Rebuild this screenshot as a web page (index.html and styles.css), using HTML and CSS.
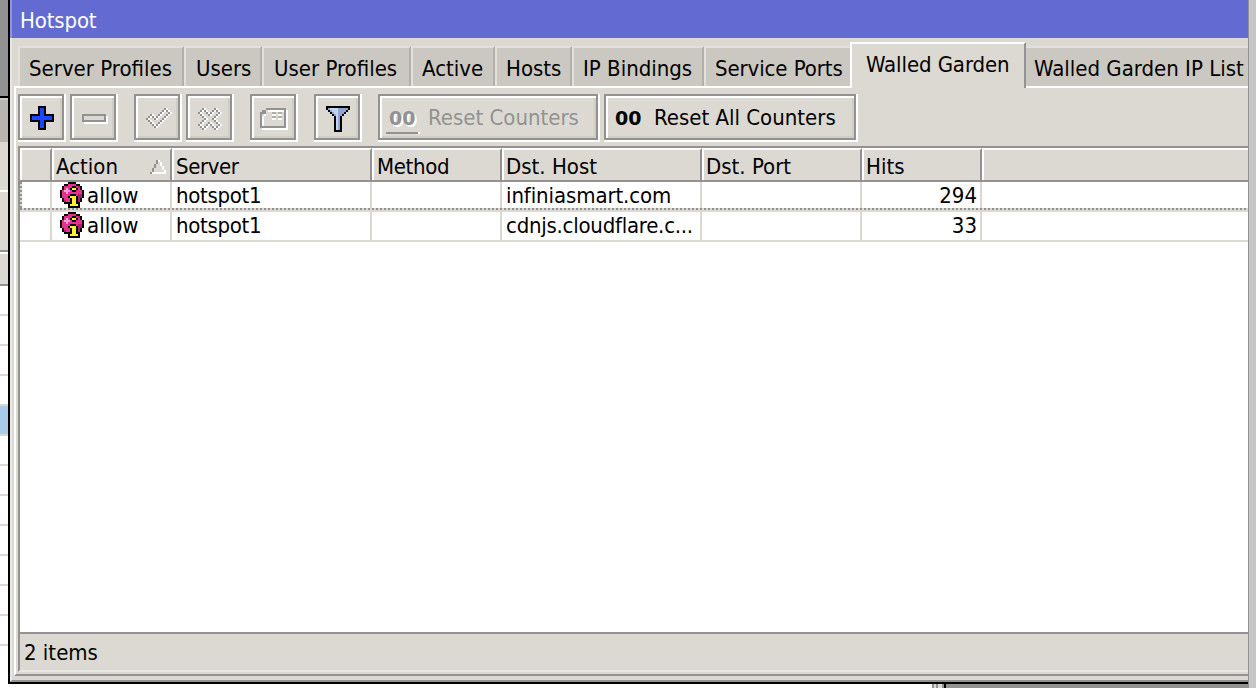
FILE: index.html
```html
<!DOCTYPE html>
<html lang="en">
<head>
<meta charset="utf-8">
<title>Hotspot</title>
<link rel="stylesheet" href="styles.css">
</head>
<body>
<div class="desktop">
  <div class="back-window">
    <div class="back-dark"></div>
    <div class="back-mid"></div>
    <div class="back-toolbar"></div>
    <div class="back-tools"></div>
    <div class="back-head"></div>
    <div class="back-row"></div><div class="back-row"></div><div class="back-row"></div><div class="back-row"></div>
    <div class="back-row selected"></div>
    <div class="back-row"></div><div class="back-row"></div><div class="back-row"></div><div class="back-row"></div>
    <div class="back-row"></div><div class="back-row"></div><div class="back-row"></div>
  </div>
  <div class="main">
    <section class="window">
      <header class="title">Hotspot</header>
      <div class="body">
        <nav class="tabs">
          <div class="tab t1">Server Profiles</div>
          <div class="tab t2">Users</div>
          <div class="tab t3">User Profiles</div>
          <div class="tab t4">Active</div>
          <div class="tab t5">Hosts</div>
          <div class="tab t6">IP Bindings</div>
          <div class="tab t7">Service Ports</div>
          <div class="tab t8 active">Walled Garden</div>
          <div class="tab t9">Walled Garden IP List</div>
        </nav>
        <div class="panel">
          <div class="toolbar">
            <div class="btn"><svg class="icon" data-sprite="plus"></svg></div>
            <div class="btn gap"><svg class="icon minus" data-sprite="minus"></svg></div>
            <div class="btn"><svg class="icon low" data-sprite="check"></svg></div>
            <div class="btn gap"><svg class="icon low" data-sprite="cross"></svg></div>
            <div class="btn gap"><svg class="icon low note" data-sprite="note"></svg></div>
            <div class="btn gap"><svg class="icon" data-sprite="funnel"></svg></div>
            <div class="btn wide disabled"><span class="zeros">00</span><span class="label">Reset Counters</span></div>
            <div class="btn wide all"><span class="zeros">00</span><span class="label">Reset All Counters</span></div>
          </div>
          <div class="table">
            <div class="row head">
              <div></div><div>Action<svg class="sort" data-sprite="sort"></svg></div><div class="server">Server</div><div class="method">Method</div><div>Dst. Host</div><div>Dst. Port</div><div>Hits</div><div></div>
            </div>
            <div class="row focus">
              <div></div><div class="action"><svg data-sprite="info"></svg>allow</div><div class="name">hotspot1</div><div></div><div class="host">infiniasmart.com</div><div></div><div class="num">294</div><div></div>
            </div>
            <div class="row">
              <div></div><div class="action"><svg data-sprite="info"></svg>allow</div><div class="name">hotspot1</div><div></div><div class="dots">cdnjs.cloudflare.c...</div><div></div><div class="num">33</div><div></div>
            </div>
            <div class="empty"></div>
          </div>
          <footer class="status">2 items</footer>
        </div>
      </div>
    </section>
    <div class="below"><div class="below-white"></div><div class="below-frame"></div><div class="below-gray"></div></div>
  </div>
  <div class="edge"></div>
</div>
<script src="sprites.js"></script>
</body>
</html>
```
FILE: styles.css
```css
* { box-sizing: border-box; }
body {
  margin: 0;
  width: 1256px;
  height: 688px;
  overflow: hidden;
  background: #fff;
  color: #000;
  font: 22px/26px "DejaVu Sans Condensed", "DejaVu Sans", sans-serif;
  white-space: nowrap;
}
svg { display: block; flex: none; shape-rendering: crispEdges; }
.desktop { display: flex; height: 688px; }

.back-window { width: 8px; flex: none; background: #fff; }
.back-dark { height: 98px; background: #929292; border-bottom: 2px solid #000; }
.back-mid { height: 44px; background: #b8b5b0; border-top: 2px solid #cbc8c1; }
.back-toolbar { height: 50px; background: #dcd9d2; border-bottom: 2px solid #fff; }
.back-tools { height: 60px; background: #dcd9d2; border-bottom: 2px solid #929292; }
.back-head { height: 34px; background: #dcd9d2; border-top: 2px solid #fff; border-bottom: 2px solid #929292; }
.back-row { height: 30px; border-bottom: 2px solid #dcd9d2; }
.back-row.selected { background: #a9cbea; }

.main { width: 1240px; flex: none; display: flex; flex-direction: column; }
.window {
  height: 684px;
  flex: none;
  display: flex;
  flex-direction: column;
  border-left: 2px solid #000;
  border-bottom: 2px solid #000;
  background: #dcd9d2;
}
.title {
  height: 38px;
  flex: none;
  padding: 8px 0 0 8px;
  color: #fff;
  background: #636bd3;
  border-left: 2px solid #9196de;
  letter-spacing: -0.15px;
}
.body {
  height: 644px;
  display: flex;
  flex-direction: column;
  border-left: 2px solid #e9e7e3;
  border-bottom: 2px solid #929292;
  padding: 4px 0 4px 2px;
}
.tabs { display: flex; align-items: flex-end; height: 46px; flex: none; padding-left: 4px; position: relative; z-index: 1; }
.tab {
  height: 40px;
  flex: none;
  margin-bottom: 2px;
  padding: 8px 0 0 8px;
  background: #cbc8c1;
  border: 2px solid #e3e0db;
  border-right-color: #b3b0ab;
  border-bottom: 0;
}
.t1 { width: 166px; padding-left: 9px; }
.t2 { width: 78px; padding-left: 10px; }
.t3 { width: 149px; padding-left: 10px; }
.t4 { width: 84px; padding-left: 9px; }
.t5 { width: 77px; padding-left: 9px; }
.t6 { width: 132px; padding-left: 9px; }
.t7 { width: 146px; padding-left: 9px; border-right: 0; letter-spacing: -0.1px; }
.t8 { width: 176px; padding-left: 14px; letter-spacing: -0.1px; }
.t9 { width: 222px; padding-left: 8px; border-left: 0; border-right: 0; }
.tab.active {
  height: 46px;
  margin-bottom: 0;
  background: #dcd9d2;
  border-color: #fff #929292 #fff #fff;
}
.panel {
  height: 590px;
  flex: none;
  margin-top: -2px;
  border-top: 2px solid #fff;
  border-left: 2px solid #fff;
  border-bottom: 2px solid #929292;
  padding: 6px 0 2px 2px;
  display: flex;
  flex-direction: column;
}
.toolbar { display: flex; height: 52px; flex: none; }
.btn {
  position: relative;
  width: 46px;
  height: 46px;
  flex: none;
  margin-right: 6px;
  display: flex;
  border: 2px solid #929292;
  background: #dcd9d2;
  box-shadow: 2px 0 #fff, 0 2px #fff, 2px 2px #fff, inset 2px 2px #fff, inset -2px -2px #d0cdc5;
}
.icon { margin: 10px 0 0 10px; }
.icon.low { margin-top: 12px; }
.icon.minus { margin-top: 18px; }
.icon.note { margin-left: 8px; }
.btn.gap { margin-right: 18px; }
.btn.wide { width: 220px; align-items: center; padding-left: 9px; }
.btn.all { width: 252px; }
.zeros { width: 39px; padding-top: 2px; font: bold 19px/26px "DejaVu Sans", sans-serif; }
.disabled { color: #929292; }
.disabled .zeros { text-shadow: 2px 2px #fff; }
.disabled .zeros::after {
  content: "";
  position: absolute;
  left: 6px;
  top: 36px;
  width: 32px;
  height: 2px;
  background: #929292;
  box-shadow: 2px 0 #fff;
}
.label { padding-top: 1px; }

.table { flex: 1; display: flex; flex-direction: column; background: #fff; border: 2px solid #929292; border-right: 0; border-bottom: 0; }
.row {
  display: grid;
  grid-template-columns: 32px 120px 200px 130px 200px 160px 120px 1fr;
  height: 30px;
  flex: none;
  border-bottom: 2px solid #dcd9d2;
}
.row > div { overflow: hidden; padding-left: 4px; border-right: 2px solid #dcd9d2; height: 28px; padding-top: 1px; }
.row > div:last-child { border-right: 0; }
.row.head { height: 34px; border-bottom-color: #929292; }
.row.head > div {
  height: 32px;
  display: flex;
  justify-content: space-between;
  padding: 4px 4px 0 2px;
  background: #dcd9d2;
  border-right-color: #929292;
  border-top: 2px solid #fff;
  border-left: 2px solid #fff;
}
.row.head .server { letter-spacing: -0.4px; }
.row.head .method { letter-spacing: -0.35px; padding-left: 3px; }
.sort { margin-top: 6px; }
.row.focus { position: relative; }
.row.focus::after {
  content: "";
  position: absolute;
  inset: 0;
  background:
    repeating-linear-gradient(90deg, #929292 0 2px, #dcd9d2 2px 4px) 0 100% / 100% 2px no-repeat,
    repeating-linear-gradient(180deg, #929292 0 2px, #dcd9d2 2px 4px) 0 0 / 2px 100% no-repeat;
}
.row .action { display: flex; gap: 3px; padding-left: 8px; }
.row .action svg { margin-top: -1px; }
.row .name { letter-spacing: -0.3px; }
.row .host { letter-spacing: -0.1px; }
.row .num { text-align: right; padding-right: 3px; }
.row .dots { letter-spacing: -0.25px; }
.status {
  height: 40px;
  flex: none;
  padding: 6px 0 0 4px;
  border-top: 2px solid #929292;
  border-left: 2px solid #929292;
  border-bottom: 2px solid #e8e6e2;
}
.below { display: flex; height: 4px; }
.below-white { width: 924px; background: #fff; }
.below-frame { width: 14px; background: linear-gradient(90deg, #929292 0 2px, #dcd9d2 2px 4px, #929292 4px 6px, #dcd9d2 6px 10px, #929292 10px 12px, #000 12px); }
.below-gray { flex: 1; background: #929292; }
.edge { width: 8px; flex: none; background: #c6c6c6; border-left: 1px solid #929292; }
```
FILE: sprites.js
```js
// Two-pixel-per-cell icons, one character per cell.
const colors = {
  k: '#000', b: '#1a47ff', g: '#929292', w: '#fff', p: '#e6308f', d: '#b01c68',
  l: '#f8a0d0', y: '#fff22d', f: '#c4d3ee', a: '#8fa6d4', s: '#b0adaa'
};
const sprites = {
  plus: ['....kkkk....', '....kbbk....', '....kbbk....', '....kbbk....', 'kkkkkbbkkkkk', 'kbbbbbbbbbbk',
    'kbbbbbbbbbbk', 'kkkkkbbkkkkk', '....kbbk....', '....kbbk....', '....kbbk....', '....kkkk....'],
  minus: ['gggggggggggg.', 'g..........gw', 'g..........gw', 'ggggggggggggw', '.wwwwwwwwwwww'],
  check: ['.........gw..', '........gwgw.', '.......gw..gw', '..gw..gw..gw.', '.gwgwgw..gw..', 'gw..gw..gw...',
    '.gw....gw....', '..gw..gw.....', '...gwgw......', '....gw.......'],
  cross: ['..gw....gw..', '.gwgw..gwgw.', 'gw..gwgw..gw', '.gw..gw..gw.', '..gw....gw..', '...gw..gw...',
    '..gw....gw..', '.gw..gw..gw.', 'gw..gwgw..gw', '.gwgw..gwgw.', '..gw....gw..'],
  note: ['...gggggggggg.', '.gg.wwwwwwwwgw', 'ggg...ss.ss.gw', 'g.w...ww.ww.gw', 'gw....ss.ss.gw',
    'gw....ww.ww.gw', 'gw..........gw', 'gw..........gw', 'gw..........gw', 'gggggggggggggw', '.wwwwwwwwwwwww'],
  funnel: ['kkkkkkkkkkkk', 'kaffffaaaaak', '.kafffaaaak.', '..kaffaaak..', '...kafaak...', '....kfak....',
    '....kfak....', '....kfak....', '....kfak....', '....kfak....', '....kfak....', '....kfak....', '....kkkk....'],
  info: ['....kkkk....', '..kkppppkk..', '.kppppkkpdk.', '.kplpkyykpk.', 'kplllpkkpppk', 'kpplpppppppk',
    'kppppkkkpddk', 'kpppkyyykddk', '.kpppkyykdk.', '.kdppkyykdk.', '..kkkkyykk..', '....kyyyyk..', '....kkkkkk..'],
  sort: ['...gw...', '...g.w..', '..g..w..', '..g...w.', '.g....w.', '.g.....w', 'gwwwwwww']
};
for (const svg of document.querySelectorAll('svg[data-sprite]')) {
  const rows = sprites[svg.dataset.sprite];
  const width = Math.max(...rows.map(r => r.length));
  svg.setAttribute('viewBox', `0 0 ${width} ${rows.length}`);
  svg.setAttribute('width', width * 2);
  svg.setAttribute('height', rows.length * 2);
  let cells = '';
  rows.forEach((row, y) => [...row].forEach((c, x) => {
    if (colors[c]) cells += `<rect x="${x}" y="${y}" width="1" height="1" fill="${colors[c]}"/>`;
  }));
  svg.innerHTML = cells;
}
```
